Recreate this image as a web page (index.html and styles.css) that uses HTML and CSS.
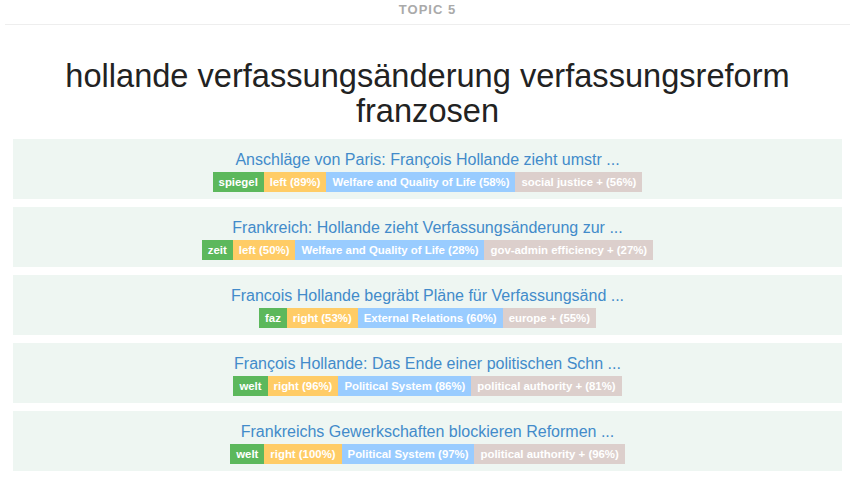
FILE: index.html
```html
<!DOCTYPE html>
<html>
<head>
<meta charset="utf-8">
<link rel="stylesheet" href="styles.css">
</head>
<body>
<div class="page">
  <div class="topic-bar">Topic 5</div>
  <h1 class="heading">hollande verfassungsänderung verfassungsreform franzosen</h1>
  <div class="articles">
    <div class="card">
      <a class="title" href="#">Anschläge von Paris: François Hollande zieht umstr ...</a>
      <div class="tags">
        <span class="tag src">spiegel</span><span class="tag lean">left (89%)</span><span class="tag cat">Welfare and Quality of Life (58%)</span><span class="tag sub">social justice + (56%)</span>
      </div>
    </div>
    <div class="card">
      <a class="title" href="#">Frankreich: Hollande zieht Verfassungsänderung zur ...</a>
      <div class="tags">
        <span class="tag src">zeit</span><span class="tag lean">left (50%)</span><span class="tag cat">Welfare and Quality of Life (28%)</span><span class="tag sub">gov-admin efficiency + (27%)</span>
      </div>
    </div>
    <div class="card">
      <a class="title" href="#">Francois Hollande begräbt Pläne für Verfassungsänd ...</a>
      <div class="tags">
        <span class="tag src">faz</span><span class="tag lean">right (53%)</span><span class="tag cat">External Relations (60%)</span><span class="tag sub">europe + (55%)</span>
      </div>
    </div>
    <div class="card">
      <a class="title" href="#">François Hollande: Das Ende einer politischen Schn ...</a>
      <div class="tags">
        <span class="tag src">welt</span><span class="tag lean">right (96%)</span><span class="tag cat">Political System (86%)</span><span class="tag sub">political authority + (81%)</span>
      </div>
    </div>
    <div class="card">
      <a class="title" href="#">Frankreichs Gewerkschaften blockieren Reformen ...</a>
      <div class="tags">
        <span class="tag src">welt</span><span class="tag lean">right (100%)</span><span class="tag cat">Political System (97%)</span><span class="tag sub">political authority + (96%)</span>
      </div>
    </div>
  </div>
</div>
</body>
</html>
```
FILE: styles.css
```css
html, body {
  margin: 0;
  padding: 0;
  background: #ffffff;
}
body {
  font-family: "Liberation Sans", Arial, Helvetica, sans-serif;
  color: #222222;
}
.page {
  width: 845px;
  margin-left: 5px;
}
.topic-bar {
  padding: 1px 0 5px;
  line-height: 18px;
  font-size: 13px;
  font-weight: bold;
  letter-spacing: 1px;
  text-transform: uppercase;
  color: #aaaaaa;
  text-align: center;
  border-bottom: 1px solid #eeeeee;
}
.heading {
  margin: 33px 0 11px;
  font-size: 32.6px;
  line-height: 35px;
  font-weight: normal;
  text-align: center;
  color: #222222;
}
.articles {
  display: flex;
  flex-direction: column;
  gap: 8px;
  padding: 0 8px;
}
.card {
  background: #eef6f2;
  padding: 10px 0 7px;
  display: flex;
  flex-direction: column;
  align-items: center;
}
.title {
  font-size: 16px;
  line-height: 21px;
  color: #428bca;
  text-decoration: none;
}
.tags {
  display: flex;
  margin-top: 2px;
}
.tag {
  display: block;
  height: 20px;
  line-height: 20px;
  padding: 0 6px;
  font-size: 11.4px;
  font-weight: bold;
  color: #ffffff;
  white-space: nowrap;
}
.src { background: #5cb85c; }
.lean { background: #ffcc66; }
.cat { background: #99ccff; }
.sub { background: #dccfcc; }
```
